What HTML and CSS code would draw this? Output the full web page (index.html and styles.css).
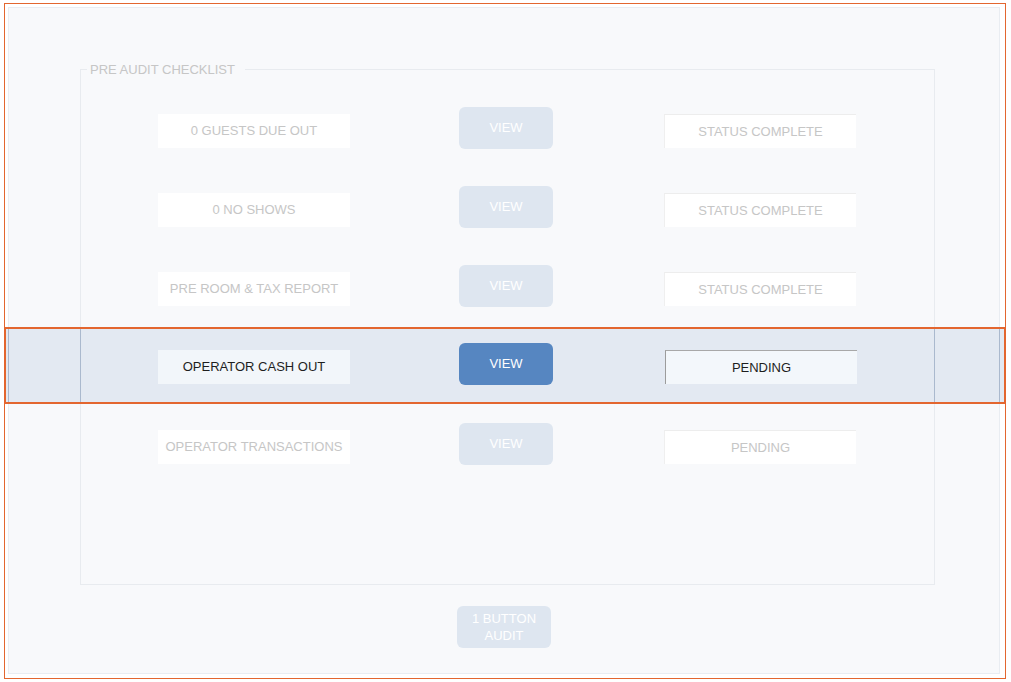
FILE: index.html
```html
<!DOCTYPE html>
<html>
<head>
<meta charset="utf-8">
<link rel="stylesheet" href="styles.css">
</head>
<body>
<div class="frame">
  <div class="panel">
    <div class="checklist">
      <div class="legend">PRE AUDIT CHECKLIST</div>
      <div class="row is-muted">
        <div class="cell label">0 GUESTS DUE OUT</div>
        <div class="btn">VIEW</div>
        <div class="cell status">STATUS COMPLETE</div>
      </div>
      <div class="row is-muted">
        <div class="cell label">0 NO SHOWS</div>
        <div class="btn">VIEW</div>
        <div class="cell status">STATUS COMPLETE</div>
      </div>
      <div class="row is-muted">
        <div class="cell label">PRE ROOM &amp; TAX REPORT</div>
        <div class="btn">VIEW</div>
        <div class="cell status">STATUS COMPLETE</div>
      </div>
      <div class="row is-active">
        <div class="cell label">OPERATOR CASH OUT</div>
        <div class="btn">VIEW</div>
        <div class="cell status">PENDING</div>
      </div>
      <div class="row is-muted">
        <div class="cell label">OPERATOR TRANSACTIONS</div>
        <div class="btn">VIEW</div>
        <div class="cell status">PENDING</div>
      </div>
    </div>
    <div class="audit-btn">1 BUTTON<br>AUDIT</div>
  </div>
</div>
</body>
</html>
```

FILE: styles.css
```css
body {
  margin: 0;
  background: #ffffff;
  font-family: "Liberation Sans", Arial, sans-serif;
  font-size: 13px;
}

.frame {
  box-sizing: border-box;
  width: 1002px;
  height: 676px;
  margin: 3px 0 0 4px;
  border: 1px solid #e3662f;
  padding: 3px 0 0 3px;
}

.panel {
  box-sizing: border-box;
  width: 992px;
  height: 667px;
  border: 1px solid #e9edf2;
  background: #f8f9fb;
  padding: 61px 0 0 71px;
}

.checklist {
  position: relative;
  box-sizing: border-box;
  width: 855px;
  height: 516px;
  border: 1px solid #e8ebef;
  padding-top: 21px;
}

.legend {
  position: absolute;
  top: -8px;
  left: 6px;
  padding: 0 10px 0 3px;
  background: #f8f9fb;
  color: #c6c6c6;
  line-height: 16px;
}

.row {
  position: relative;
  z-index: 0;
  display: flex;
  align-items: flex-start;
  height: 79px;
  padding-left: 77px;
}

.cell {
  box-sizing: border-box;
  width: 192px;
  height: 34px;
  margin-top: 23px;
  display: flex;
  align-items: center;
  justify-content: center;
  padding-bottom: 1px;
}

.btn {
  box-sizing: border-box;
  width: 94px;
  height: 42px;
  margin: 16px 0 0 109px;
  border-radius: 6px;
  display: flex;
  align-items: center;
  justify-content: center;
  color: #ffffff;
  padding-bottom: 2px;
}

.status {
  margin-left: 111px;
}

.is-muted .cell {
  background: #ffffff;
  color: #c6c6c6;
}

.is-muted .status {
  border-top: 1px solid #ededed;
  border-left: 1px solid #efefef;
}

.is-muted .btn {
  background: #dee6f0;
}

.is-active .cell {
  margin-top: 22px;
  background: #f2f6fa;
  color: #1e1e1e;
}

.is-active .btn {
  margin-top: 15px;
  background: #5686c1;
}

.is-active .status {
  margin-left: 112px;
  border-top: 1px solid #a8a8a8;
  border-left: 1px solid #9c9c9c;
  background: #f3f7fb;
}

.is-active::before {
  content: "";
  position: absolute;
  z-index: -1;
  left: -77px;
  top: -1px;
  width: 1002px;
  height: 77px;
  box-sizing: border-box;
  border: 2px solid #e3662f;
  background:
    linear-gradient(#aab9ce, #aab9ce) 2px 0 / 1px 100% no-repeat,
    linear-gradient(#aab9ce, #aab9ce) 74px 0 / 1px 100% no-repeat,
    linear-gradient(#aab9ce, #aab9ce) 928px 0 / 1px 100% no-repeat,
    linear-gradient(#aab9ce, #aab9ce) 993px 0 / 1px 100% no-repeat,
    #e3e9f2;
}

.audit-btn {
  box-sizing: border-box;
  width: 94px;
  height: 42px;
  margin: 21px 0 0 377px;
  border-radius: 6px;
  background: #dee6f0;
  color: #ffffff;
  display: flex;
  align-items: center;
  justify-content: center;
  text-align: center;
  line-height: 17px;
}
```
